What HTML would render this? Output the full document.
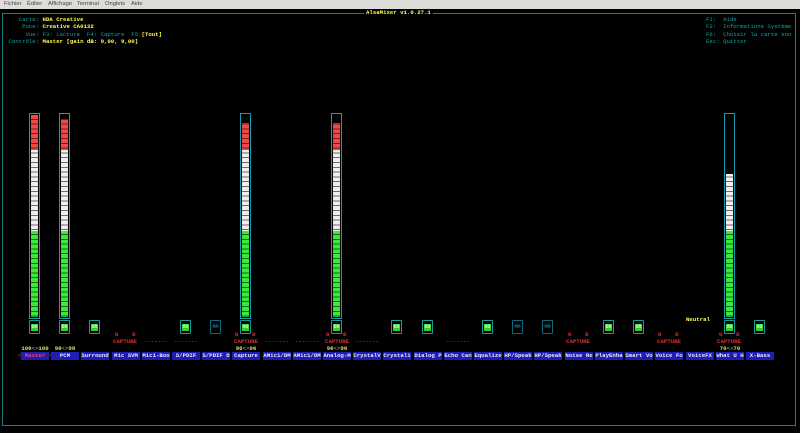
<!DOCTYPE html>
<html><head><meta charset="utf-8"><style>
*{margin:0;padding:0;box-sizing:border-box}
body{width:800px;height:433px;background:#000;position:relative;overflow:hidden;font-family:"Liberation Mono",monospace;font-size:5.7px;line-height:7.3px;color:#10a8a8}
.a{position:absolute;white-space:pre}
.menu{position:absolute;left:0;top:0;width:800px;height:9px;background:#dcdcd8;color:#444;font-family:"Liberation Sans",sans-serif;font-size:5.8px;line-height:9px}
.menu span{position:absolute;top:0}
.y{color:#ffff50;font-weight:bold}
.mb{position:absolute;top:113px;width:11px;height:206px;border:1px solid #1a9ab0}
.fill{position:absolute;left:1px;right:1px;top:1px;bottom:1px;background:
repeating-linear-gradient(to bottom,transparent 0,transparent 3.8px,rgba(0,0,0,.55) 3.8px,rgba(0,0,0,.55) 4.8px),
linear-gradient(to bottom,#f04848 0,#f04848 35px,#eeeeee 35px,#eeeeee 116px,#3de83d 116px,#3de83d 100%)}
.cov{position:absolute;left:1px;right:1px;top:1px;background:#000}
.sw{position:absolute;top:320px;width:11px;height:14px;border:1px solid #1a9a9a;border-radius:1px}
.sw i{position:absolute;left:1px;right:1px;top:3px;height:7px;background:#30d030;color:#dfd;font-style:normal;font-size:5px;line-height:7px;text-align:center;font-weight:bold}
.mm{border-color:#0e6a7a}
.mm i{background:none;color:#0e7a8a}
.gd{position:absolute;top:331px;color:#e03030;font-weight:bold;white-space:pre}
.cap{position:absolute;top:338px;width:30px;text-align:center;color:#e03030;font-weight:bold}
.dash{position:absolute;top:338px;width:30px;text-align:center;color:#777}
.val{position:absolute;top:345px;width:40px;text-align:center;color:#e0e050;font-weight:bold;white-space:pre}
.val b{color:#aaa;font-weight:normal}
.lb{position:absolute;top:352px;width:28px;height:8px;background:#1e1eb4;color:#e8e8ff;font-weight:bold;text-align:center;white-space:pre;overflow:hidden;line-height:8px}
</style></head><body>
<div class="menu"><span style="left:4px">Fichier</span><span style="left:27px">Éditer</span><span style="left:48px">Affichage</span><span style="left:77px">Terminal</span><span style="left:105px">Onglets</span><span style="left:131px">Aide</span></div>
<div class="a" style="left:2px;top:13px;width:794px;height:413px;border:1px solid #168080"></div>
<div class="a y" style="left:364px;top:9px;background:#000;padding:0 2px">AlsaMixer v1.0.27.1</div>
<div class="a" style="left:5px;top:16px">    Carte: <span class="y">HDA Creative</span>
     Puce: <span class="y">Creative CA0132</span>
      Vue: F3: Lecture  F4: Capture  F5:<span class="y">[Tout]</span>
 Contrôle: <span class="y">Master [gain dB: 9,00, 9,00]</span></div>
<div class="a" style="left:706px;top:16px">F1:  Aide
F2:  Informations Système
F6:  Choisir la carte son
Esc: Quitter</div>

<div class="mb" style="left:29px"><div class="fill"></div></div>
<div class="mb" style="left:59px"><div class="fill"></div><div class="cov" style="height:4px"></div></div>
<div class="mb" style="left:240px"><div class="fill"></div><div class="cov" style="height:8px"></div></div>
<div class="mb" style="left:331px"><div class="fill"></div><div class="cov" style="height:8px"></div></div>
<div class="mb" style="left:724px"><div class="fill"></div><div class="cov" style="height:59px"></div></div>

<div class="a y" style="left:686px;top:316px">Neutral</div>

<div class="sw" style="left:29px"><i>OO</i></div>
<div class="sw" style="left:59px"><i>OO</i></div>
<div class="sw" style="left:89px"><i>OO</i></div>
<div class="sw" style="left:180px"><i>OO</i></div>
<div class="sw mm" style="left:210px"><i>MM</i></div>
<div class="sw" style="left:240px"><i>OO</i></div>
<div class="sw" style="left:331px"><i>OO</i></div>
<div class="sw" style="left:391px"><i>OO</i></div>
<div class="sw" style="left:422px"><i>OO</i></div>
<div class="sw" style="left:482px"><i>OO</i></div>
<div class="sw mm" style="left:512px"><i>MM</i></div>
<div class="sw mm" style="left:542px"><i>MM</i></div>
<div class="sw" style="left:603px"><i>OO</i></div>
<div class="sw" style="left:633px"><i>OO</i></div>
<div class="sw" style="left:724px"><i>OO</i></div>
<div class="sw" style="left:754px"><i>OO</i></div>

<div class="gd" style="left:115px">G    D</div><div class="cap" style="left:110px">CAPTURE</div>
<div class="gd" style="left:235px">G    D</div><div class="cap" style="left:231px">CAPTURE</div>
<div class="gd" style="left:326px">G    D</div><div class="cap" style="left:322px">CAPTURE</div>
<div class="gd" style="left:568px">G    D</div><div class="cap" style="left:563px">CAPTURE</div>
<div class="gd" style="left:658px">G    D</div><div class="cap" style="left:654px">CAPTURE</div>
<div class="gd" style="left:719px">G    D</div><div class="cap" style="left:714px">CAPTURE</div>
<div class="dash" style="left:141px">-------</div>
<div class="dash" style="left:171px">-------</div>
<div class="dash" style="left:262px">-------</div>
<div class="dash" style="left:292px">-------</div>
<div class="dash" style="left:352px">-------</div>
<div class="dash" style="left:443px">-------</div>

<div class="val" style="left:15px">100<b>&lt;&gt;</b>100</div>
<div class="val" style="left:45px">98<b>&lt;&gt;</b>98</div>
<div class="val" style="left:226px">96<b>&lt;&gt;</b>96</div>
<div class="val" style="left:317px">96<b>&lt;&gt;</b>96</div>
<div class="val" style="left:710px">70<b>&lt;&gt;</b>70</div>

<div class="a" style="left:18px;top:352px;color:#e03040;line-height:8px">&lt;        &gt;</div>
<div class="lb" style="left:21px;color:#ff4060">Master</div>
<div class="lb" style="left:51px">PCM</div>
<div class="lb" style="left:81px">Surround</div>
<div class="lb" style="left:112px">Mic SVM</div>
<div class="lb" style="left:142px">Mic1-Boo</div>
<div class="lb" style="left:172px">S/PDIF</div>
<div class="lb" style="left:202px">S/PDIF D</div>
<div class="lb" style="left:232px">Capture</div>
<div class="lb" style="left:263px">AMic1/DM</div>
<div class="lb" style="left:293px">AMic1/DM</div>
<div class="lb" style="left:323px">Analog-M</div>
<div class="lb" style="left:353px">CrystalV</div>
<div class="lb" style="left:383px">Crystali</div>
<div class="lb" style="left:414px">Dialog P</div>
<div class="lb" style="left:444px">Echo Can</div>
<div class="lb" style="left:474px">Equalize</div>
<div class="lb" style="left:504px">HP/Speak</div>
<div class="lb" style="left:534px">HP/Speak</div>
<div class="lb" style="left:565px">Noise Re</div>
<div class="lb" style="left:595px">PlayEnha</div>
<div class="lb" style="left:625px">Smart Vo</div>
<div class="lb" style="left:655px">Voice Fo</div>
<div class="lb" style="left:686px">VoiceFX</div>
<div class="lb" style="left:716px">What U H</div>
<div class="lb" style="left:746px">X-Bass</div>
</body></html>
